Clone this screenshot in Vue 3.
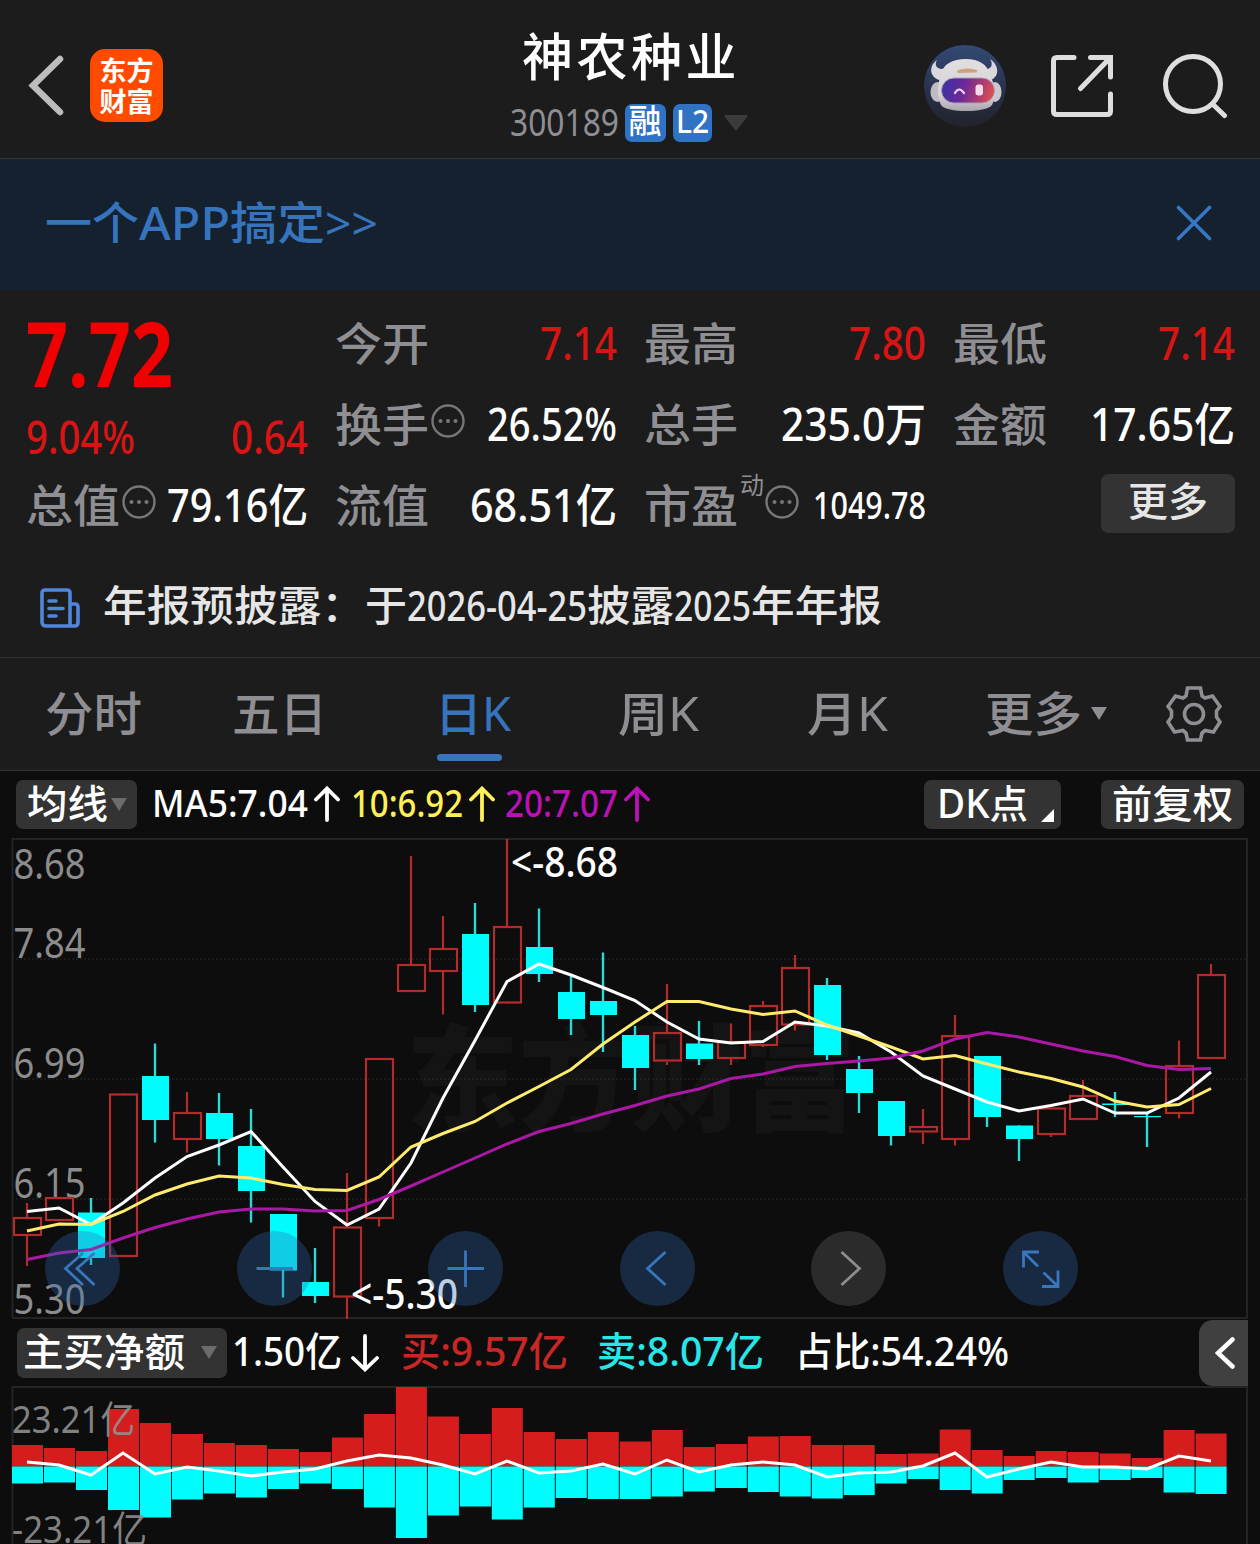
<script setup>
import { computed } from 'vue'

// squeeze or stretch a piece of text to the given width
const vFit = {
  mounted(el, { value }) {
    const w = el.getBoundingClientRect().width
    el.style.transform = `scaleX(${value / w})`
    el.style.marginRight = `${value - w}px`
  },
}

const quotes = [
  { label: '今开', value: '7.14', width: 77, red: true },
  { label: '最高', value: '7.80', width: 77, red: true },
  { label: '最低', value: '7.14', width: 77, red: true },
  { label: '换手', value: '26.52%', width: 130, tip: true },
  { label: '总手', value: '235.0万', width: 145 },
  { label: '金额', value: '17.65亿', width: 145 },
  { label: '总值', value: '79.16亿', width: 141, tip: true },
  { label: '流值', value: '68.51亿', width: 147 },
  { label: '市盈', value: '1049.78', width: 113, tip: true, sup: '动', small: true },
]

const notice = [
  { text: '年报预披露：', width: 262 },
  { text: '于', width: 42 },
  { text: '2026-04-25', width: 180 },
  { text: '披露', width: 87 },
  { text: '2025', width: 77 },
  { text: '年年报', width: 131 },
]

const tabs = [
  { text: '分时', width: 97 },
  { text: '五日', width: 95 },
  { text: '日K', width: 76, active: true },
  { text: '周K', width: 81 },
  { text: '月K', width: 81 },
]

const averages = [
  { text: 'MA5:7.04', width: 156, cls: 'white' },
  { text: '10:6.92', width: 112, cls: 'yellow' },
  { text: '20:7.07', width: 113, cls: 'purple' },
]

// [up, high, low, body top, body bottom]
const candles = [
  [1, 1203, 1266, 1217, 1236], [1, 1197, 1221, 1197, 1221], [0, 1198, 1265, 1212.5, 1258],
  [1, 1094, 1257, 1093.5, 1257], [0, 1043.5, 1142.5, 1076, 1120], [1, 1092, 1152.5, 1112, 1140],
  [0, 1093, 1165.5, 1113, 1139], [0, 1109, 1222.5, 1146, 1191], [0, 1214, 1297.5, 1214, 1270.5],
  [0, 1248, 1303, 1282, 1296], [1, 1173, 1319, 1226.5, 1297.5], [1, 1058, 1226.5, 1058, 1219],
  [1, 856, 992, 964, 992], [1, 916, 1014.5, 948, 972], [0, 903, 1012, 934, 1005],
  [1, 839, 1003, 926, 1003.5], [0, 908.5, 982, 947, 974], [0, 976, 1035, 992, 1019],
  [0, 952.5, 1052, 1001, 1015], [0, 1026, 1090, 1035, 1068], [1, 984, 1065, 1032, 1061.5],
  [0, 1021, 1065, 1043.5, 1059], [1, 1023.5, 1065, 1041, 1059], [1, 1001, 1047, 1005, 1046],
  [1, 955, 1030.5, 967, 1025.5], [0, 978, 1060, 985, 1055], [0, 1056, 1113, 1069, 1093],
  [0, 1101, 1145.5, 1101, 1136], [1, 1109, 1144, 1126, 1132.5], [1, 1015, 1145.5, 1035, 1140],
  [0, 1056, 1127, 1056, 1117], [0, 1125.5, 1161, 1125.5, 1139], [1, 1107.5, 1137, 1107.5, 1135],
  [1, 1080, 1120, 1095, 1120], [0, 1092, 1117, 1103.5, 1105], [0, 1112, 1147, 1116, 1117.2],
  [1, 1040.5, 1118.5, 1065, 1114], [1, 964, 1059, 974, 1059],
]

const ma5 = [1211.5, 1208, 1224.5, 1203, 1178, 1156.5, 1145, 1131.5, 1167, 1201.5, 1225, 1209, 1163, 1098, 1040.5, 981.5, 964, 975, 987.5, 1000.5, 1022, 1039, 1043, 1041.5, 1022, 1026, 1033, 1052, 1076, 1089, 1102, 1111, 1105.5, 1099, 1113, 1113, 1098, 1072]
const ma10 = [1231, 1224, 1224.5, 1211.5, 1195, 1184, 1176, 1178, 1184.5, 1189.5, 1190.5, 1177, 1147, 1133.5, 1121.5, 1103, 1086.5, 1069.5, 1044, 1022, 1001.5, 1001.5, 1009, 1014.5, 1011, 1025, 1036, 1047, 1059, 1055.5, 1064, 1072, 1078.5, 1087, 1101, 1107, 1104.5, 1088.5]
const ma20 = [1259.5, 1253, 1249.5, 1238, 1227.5, 1219, 1212, 1209, 1209, 1211, 1210.5, 1199.5, 1186, 1172, 1158, 1144, 1131.5, 1123.5, 1114, 1105.5, 1096, 1089, 1078.5, 1074, 1066.5, 1063.5, 1061, 1058, 1051, 1039, 1032.5, 1037, 1044, 1051, 1056.5, 1065.5, 1069.5, 1068.5]

const buyTop = [1445, 1448, 1451, 1409, 1423, 1434, 1443, 1445, 1449, 1452, 1437.5, 1414, 1387, 1416.5, 1434, 1408, 1432, 1439, 1432, 1441.5, 1430, 1447, 1444, 1436.5, 1436, 1445, 1445, 1454, 1453.5, 1429.5, 1450, 1456, 1451, 1452, 1453.5, 1458, 1430, 1433.5]
const sellBottom = [1483.5, 1482.5, 1490, 1510, 1517.5, 1499.5, 1493.5, 1497.5, 1489, 1483.5, 1489, 1507.5, 1538, 1515.5, 1506.5, 1519.5, 1507.5, 1498, 1499, 1499, 1496.5, 1491.5, 1488, 1492, 1496.5, 1498.5, 1495, 1483.5, 1479, 1490, 1493.5, 1480, 1478, 1482.5, 1480, 1478, 1492.5, 1494]
const net = [1462, 1465, 1475, 1453, 1474, 1467, 1471, 1476, 1472, 1469, 1461, 1455, 1458, 1465, 1474, 1461, 1473, 1471, 1464, 1474, 1460, 1472, 1465, 1462, 1465, 1477, 1473, 1472, 1466, 1453, 1477, 1469, 1462, 1467, 1467, 1469, 1456, 1461]

const toPoints = (list) => list.map((y, i) => `${27 + 32 * i},${y}`).join(' ')
const lines = computed(() => [
  { cls: 'line-white', points: toPoints(ma5) },
  { cls: 'line-yellow', points: toPoints(ma10) },
  { cls: 'line-purple', points: toPoints(ma20) },
])

const axis = [
  { text: '8.68', y: 879 },
  { text: '7.84', y: 958 },
  { text: '6.99', y: 1078 },
  { text: '6.15', y: 1198 },
  { text: '5.30', y: 1314 },
]

const controls = [
  { name: 'first', d: 'M38 22L20.5 37.5L38 54M49.5 22L32 37.5L49.5 54' },
  { name: 'zoom-out', d: 'M19.5 37.5H56' },
  { name: 'zoom-in', d: 'M19.5 37.5H56M37.5 19.5V56' },
  { name: 'prev', d: 'M45.5 21L27.5 37.5L45.5 54' },
  { name: 'next', d: 'M30.5 21L48.5 37.5L30.5 54', disabled: true },
  { name: 'expand', d: 'M36 21H20.5V36.5M21 21.5L35 35.5M39 55.5H55V39.5M54.5 55L40.500 41.500' },
]
</script>

<template>
  <div class="page">
    <header class="header">
      <div class="header-left">
        <svg class="back" width="38" height="64" viewBox="0 0 38 64">
          <path d="M33 5L6 31.5L33 58" />
        </svg>
        <div class="logo">
          <span>东方</span>
          <span>财富</span>
        </div>
      </div>
      <div class="header-center">
        <h1 class="title">神农种业</h1>
        <div class="code-row">
          <span v-fit="109" class="t code">300189</span>
          <span class="badge margin-badge">融</span>
          <span class="badge"><span v-fit="33" class="t">L2</span></span>
          <svg class="caret" width="24" height="16" viewBox="0 0 24 16"><path d="M1 0H23Q24 1 23 2L13 15Q12 16 11 15L1 2Q0 1 1 0Z" /></svg>
        </div>
      </div>
      <div class="header-right">
        <svg width="82" height="82" viewBox="0 0 82 82">
          <defs>
            <linearGradient id="sky" x1="0" y1="0" x2="0" y2="1">
              <stop offset="0" stop-color="#334a75" />
              <stop offset="0.55" stop-color="#28324c" />
              <stop offset="1" stop-color="#21232b" />
            </linearGradient>
            <linearGradient id="visor" x1="0" y1="0" x2="1" y2="0.15">
              <stop offset="0" stop-color="#3433a5" />
              <stop offset="0.45" stop-color="#6a2899" />
              <stop offset="0.8" stop-color="#ad3c70" />
              <stop offset="1" stop-color="#d54c58" />
            </linearGradient>
            <linearGradient id="shell" x1="0" y1="0" x2="0" y2="1">
              <stop offset="0" stop-color="#e2dfe1" />
              <stop offset="0.7" stop-color="#d6d2d6" />
              <stop offset="1" stop-color="#aaa5ad" />
            </linearGradient>
          </defs>
          <circle cx="41" cy="41" r="41" fill="url(#sky)" />
          <path d="M13 15C5 21 5 31 15 35L22 31L24 22L18 24C13 24 10 20 13 15ZM66 14C75 20 76 31 67 35L60 31L58 22L63 24C68 23 69 19 66 14Z" fill="#dbd8dc" />
          <ellipse cx="13.500" cy="47" rx="7" ry="10" fill="#bfbbc3" />
          <ellipse cx="71" cy="47" rx="6.500" ry="10" fill="#cbc7cd" />
          <path d="M17 30C19 19 28 14 42 14C55 14 63 19 66 30C70 37 73 51 68 60C62 68 22 68 17 60C12 50 14 37 17 30Z" fill="url(#shell)" />
          <rect x="17.5" y="33" width="53" height="25" rx="12.5" fill="url(#visor)" stroke="#aaa2b8" />
          <path d="M34 25Q44 22 53 25Q54 28 50 27.500L36 28Q31 28 34 25Z" fill="#d0a27c" />
          <path d="M31 48Q35 41 40 48" fill="none" stroke="#e9d7f2" stroke-width="2.2" stroke-linecap="round" />
          <rect x="51.5" y="39.5" width="7.5" height="11" rx="3" fill="#f4dbea" />
        </svg>
        <svg class="head-icon share" width="64" height="64" viewBox="0 0 64 64">
          <path d="M24 3.500H7Q3.500 3.500 3.500 7V57Q3.500 60.500 7 60.500H57Q60.500 60.500 60.500 57V40M40.500 3.500H60.500V23M59 5L30.500 34.500" />
        </svg>
        <svg class="head-icon" width="66" height="66" viewBox="0 0 66 66">
          <circle cx="31" cy="31" r="27.500" />
          <path d="M50.500 51L62.500 62.500" />
        </svg>
      </div>
    </header>

    <div class="banner">
      <div class="banner-text">
        <span v-fit="94" class="t">一个</span>
        <span v-fit="91" class="t">APP</span>
        <span v-fit="95" class="t">搞定</span>
        <span v-fit="53" class="t chevrons">&gt;&gt;</span>
      </div>
      <svg width="36" height="36" viewBox="0 0 36 36"><path d="M2.500 2.500L33.500 33.500M33.500 2.500L2.500 33.500" /></svg>
    </div>

    <section class="quote">
      <div class="price-cell">
        <span v-fit="147" class="t price">7.72</span>
        <div class="change">
          <span v-fit="109" class="t">9.04%</span>
          <span v-fit="77" class="t">0.64</span>
        </div>
      </div>
      <div v-for="q in quotes" :key="q.label" class="quote-cell">
        <span v-fit="94" class="t label">{{ q.label }}</span>
        <span v-if="q.sup" class="sup">{{ q.sup }}</span>
        <svg v-if="q.tip" class="tip" width="34" height="34" viewBox="0 0 34 34">
          <circle class="ring" cx="17" cy="17" r="15.5" />
          <circle cx="9.5" cy="17" r="2" />
          <circle cx="17" cy="17" r="2" />
          <circle cx="24.5" cy="17" r="2" />
        </svg>
        <span class="space"></span>
        <span v-fit="q.width" class="t value" :class="{ red: q.red, small: q.small }">{{ q.value }}</span>
      </div>
      <div class="more-cell">
        <button class="more">更多</button>
      </div>
    </section>

    <div class="notice">
      <svg width="40" height="40" viewBox="0 0 40 40">
        <path d="M29.500 38H6Q2 38 2 34V5Q2 2 5 2H27Q30 2 30 5V38M30 16H35Q38 16 38 19V34.500Q38 38 34.500 38H29M9 13H16M9 20.500H23M9 28H16" />
      </svg>
      <div class="notice-text">
        <span v-for="n in notice" :key="n.text" v-fit="n.width" class="t">{{ n.text }}</span>
      </div>
    </div>

    <nav class="tabs">
      <div v-for="t in tabs" :key="t.text" class="tab" :class="{ active: t.active }">
        <span v-fit="t.width" class="t">{{ t.text }}</span>
      </div>
      <div class="tab">
        <span v-fit="97" class="t">更多</span>
        <svg class="tab-caret" width="16" height="13" viewBox="0 0 16 13"><path d="M0 0H16L8 13Z" /></svg>
      </div>
      <svg class="gear" width="56" height="56" viewBox="0 0 56 56">
        <path d="M21.500 2H34.500L36 10L39 12L46.500 10L54 20.500L50.500 25V31L54 36L47.500 46L39 44.500L36 47L34.500 54H21.500L20 47L17 44.500L8.500 46L2 36L5.500 31V25L2 20.500L9.500 10L17 12L20 10Z" />
        <circle cx="28" cy="28" r="9.500" />
      </svg>
    </nav>

    <section class="charts">
      <div class="indicator">
        <button class="chip ma-chip">
          <span v-fit="81" class="t">均线</span>
          <svg width="16" height="13" viewBox="0 0 16 13"><path d="M0 0H16L8 13Z" /></svg>
        </button>
        <div v-for="a in averages" :key="a.text" class="average" :class="a.cls">
          <span v-fit="a.width" class="t">{{ a.text }}</span>
          <svg width="26" height="36" viewBox="0 0 26 36"><path d="M13 34V3M2 13.500L13 2.500L24 13.500" /></svg>
        </div>
        <span class="space"></span>
        <button class="chip dk-chip">
          <span v-fit="91" class="t">DK点</span>
          <svg width="13" height="13" viewBox="0 0 13 13"><path d="M13 0V13H0Z" /></svg>
        </button>
        <button class="chip adjust-chip"><span v-fit="121" class="t">前复权</span></button>
      </div>

      <div class="kline">
        <svg width="1260" height="482" viewBox="0 838 1260 482">
          <text class="watermark" x="406" y="1122" textLength="450" lengthAdjust="spacingAndGlyphs">东方财富</text>
          <path class="frame" d="M12.500 1318.500V839H1247V1318H12.500" />
          <path class="grid" d="M12 959H1247M12 1079H1247M12 1199H1247" />
          <text v-for="a in axis" :key="a.text" class="axis" x="13.500" :y="a.y" textLength="72" lengthAdjust="spacingAndGlyphs">{{ a.text }}</text>
          <g v-for="(c, i) in candles" :key="i" :class="c[0] ? 'up' : 'down'">
            <template v-if="c[0]">
              <path :d="`M${27 + 32 * i} ${c[1]}V${c[3]}M${27 + 32 * i} ${c[4]}V${c[2]}`" />
              <rect :x="14 + 32 * i" :y="c[3] + 1" width="27" :height="c[4] - c[3] - 2" />
            </template>
            <template v-else>
              <path :d="`M${27 + 32 * i} ${c[1]}V${c[2]}`" />
              <rect :x="14 + 32 * i" :y="c[3]" width="27" :height="c[4] - c[3]" />
            </template>
          </g>
          <polyline v-for="l in lines" :key="l.cls" :class="l.cls" :points="l.points" />
          <text class="mark" x="511" y="877" textLength="107" lengthAdjust="spacingAndGlyphs">&lt;-8.68</text>
          <text class="mark" x="351" y="1309" textLength="107" lengthAdjust="spacingAndGlyphs">&lt;-5.30</text>
        </svg>
        <div class="controls">
          <button v-for="c in controls" :key="c.name" class="control" :class="{ disabled: c.disabled }">
            <svg width="75" height="75" viewBox="0 0 75 75"><path :d="c.d" /></svg>
          </button>
        </div>
      </div>

      <div class="flow-head">
        <button class="chip flow-chip">
          <span v-fit="162" class="t">主买净额</span>
          <svg width="16" height="13" viewBox="0 0 16 13"><path d="M0 0H16L8 13Z" /></svg>
        </button>
        <div class="flow-net">
          <span v-fit="110" class="t">1.50亿</span>
          <svg width="28" height="38" viewBox="0 0 28 38"><path d="M14 2V35M2 24L14 35.500L26 24" /></svg>
        </div>
        <span v-fit="167" class="t buy">买:9.57亿</span>
        <span v-fit="167" class="t sell">卖:8.07亿</span>
        <span v-fit="214" class="t ratio">占比:54.24%</span>
        <span class="space"></span>
        <button class="fold">
          <svg width="20" height="32" viewBox="0 0 20 32"><path d="M17.500 2.500L3 16L17.500 29.500" /></svg>
        </button>
      </div>

      <svg class="flow" width="1260" height="158" viewBox="0 1386 1260 158">
        <path class="frame" d="M12.500 1544V1387H1247V1544" />
        <g v-for="(y, i) in buyTop" :key="i">
          <rect class="bar-buy" :x="(12 + 31.99 * i).toFixed(1)" :y="y" width="31" :height="1466.5 - y" />
          <rect class="bar-sell" :x="(12 + 31.99 * i).toFixed(1)" y="1466.5" width="31" :height="sellBottom[i] - 1466.5" />
        </g>
        <polyline class="line-net" :points="toPoints(net)" />
        <text class="axis flow-axis" x="12" y="1433" textLength="123" lengthAdjust="spacingAndGlyphs">23.21亿</text>
        <text class="axis flow-axis" x="12" y="1543" textLength="135" lengthAdjust="spacingAndGlyphs">-23.21亿</text>
      </svg>
    </section>
  </div>
</template>

<style>
body {
  background: #0d0d0d;
}
</style>

<style scoped>
.page {
  width: 1260px;
  height: 1544px;
  overflow: hidden;
  background: #1c1c1c;
  color: #fff;
  font-family: "Noto Sans", "Noto Sans CJK SC", sans-serif;
  font-weight: 500;
}

svg {
  display: block;
  flex-shrink: 0;
}

button {
  border: none;
  padding: 0;
  font: inherit;
  color: inherit;
}

.t {
  display: inline-block;
  flex-shrink: 0;
  white-space: nowrap;
  transform-origin: left center;
}

.space {
  flex: 1;
}

/* header */
.header {
  box-sizing: border-box;
  display: grid;
  grid-template-columns: 1fr auto 1fr;
  height: 159px;
  border-bottom: 1px solid #303536;
}

.header-left {
  display: flex;
  align-items: center;
  padding: 13px 0 0 27px;
  gap: 25px;
}

.back path {
  fill: none;
  stroke: #bdbdbd;
  stroke-width: 6.5;
  stroke-linecap: round;
}

.logo {
  display: flex;
  flex-direction: column;
  align-items: center;
  justify-content: center;
  width: 73px;
  height: 73px;
  border-radius: 15px;
  background: #ff4a00;
  font-size: 27px;
  font-weight: 700;
  line-height: 31px;
}

.header-center {
  display: flex;
  flex-direction: column;
  align-items: center;
}

.title {
  margin: 24px 0 0 2px;
  font-size: 51px;
  font-weight: 500;
  line-height: 64px;
  letter-spacing: 3.5px;
}

.code-row {
  display: flex;
  align-items: center;
  height: 40px;
  margin: 15px 3px 0 0;
}

.code {
  margin-top: -5px;
  color: #8e8e93;
  font-size: 39px;
  font-weight: 400;
  line-height: 40px;
}

.badge {
  display: flex;
  justify-content: center;
  width: 39px;
  height: 38px;
  border-radius: 7px;
  background: #3072c4;
  font-size: 33px;
  line-height: 34px;
}

.margin-badge {
  width: 41px;
  margin: 0 7px 0 6px;
}

.caret {
  margin-left: 12px;
  fill: #3b3b3b;
}

.header-right {
  display: flex;
  align-items: center;
  justify-content: flex-end;
  padding: 13px 32px 0 0;
}

.head-icon {
  margin-left: 48px;
  fill: none;
  stroke: #dedede;
  stroke-width: 5;
  stroke-linecap: round;
}

.share {
  margin-left: 44px;
}

/* promo banner */
.banner {
  box-sizing: border-box;
  display: flex;
  align-items: center;
  justify-content: space-between;
  height: 131px;
  padding: 0 48px 3px 45px;
  background: #15212f;
}

.banner-text {
  display: flex;
  color: #3674bd;
  font-size: 45px;
  line-height: 60px;
}

.chevrons {
  font-weight: 400;
}

.banner > svg {
  fill: none;
  stroke: #3678c4;
  stroke-width: 3.6;
  stroke-linecap: round;
}

/* quote */
.quote {
  display: grid;
  grid-template-columns: repeat(4, 280px);
  grid-template-rows: repeat(3, 81px);
  column-gap: 29px;
  padding: 13px 25px 0 28px;
}

.price-cell {
  grid-row: span 2;
  color: #f00000;
}

.price {
  display: block;
  width: max-content;
  margin-left: -2px;
  font-size: 90px;
  font-weight: 700;
  line-height: 98px;
}

.change {
  display: flex;
  justify-content: space-between;
  margin: 6px 0 0 -2px;
  color: #d91414;
  font-size: 45px;
  line-height: 60px;
}

.quote-cell {
  display: flex;
  align-items: center;
  font-size: 46px;
  line-height: 60px;
}

.label {
  margin-left: -2px;
  color: #8e8e93;
  font-size: 45px;
  font-weight: 450;
}

.value {
  margin-top: -3px;
}

.value.red {
  color: #d91414;
}

.value.small {
  font-size: 38px;
}

.sup {
  align-self: flex-start;
  width: 24px;
  margin: 6px 0 0 2px;
  color: #8e8e93;
  font-size: 24px;
  font-weight: 400;
  line-height: 28px;
}

.tip {
  margin: 0 0 7px 2px;
  fill: #77777a;
}

.sup + .tip {
  margin-left: 1px;
}

.ring {
  fill: none;
  stroke: #77777a;
  stroke-width: 2.4;
}

.more-cell {
  display: flex;
  justify-content: flex-end;
  align-items: center;
}

.more {
  width: 134px;
  height: 59px;
  margin-bottom: 4px;
  padding-bottom: 5px;
  border-radius: 7px;
  background: #333;
  color: #e6e6e6;
  font-size: 40px;
  line-height: 54px;
}

.notice {
  box-sizing: border-box;
  display: flex;
  align-items: center;
  height: 111px;
  padding: 6px 0 0 40px;
}

.notice svg {
  margin: 6px 23px 0 0;
  fill: none;
  stroke: #4f86dc;
  stroke-width: 3.6;
  stroke-linecap: round;
  stroke-linejoin: round;
}

.notice-text {
  display: flex;
  color: #e6e6e6;
  font-size: 42px;
  line-height: 60px;
}

/* period tabs */
.tabs {
  box-sizing: border-box;
  display: grid;
  grid-template-columns: 187px 203px 183px 189px 178px 182px auto;
  align-items: center;
  justify-content: start;
  height: 114px;
  padding-left: 45px;
  border-top: 1px solid #333;
  border-bottom: 1px solid #333;
}

.tab {
  position: relative;
  display: flex;
  align-items: center;
  height: 112px;
  color: #8e8e93;
  font-size: 47px;
  font-weight: 450;
}

.tab .t {
  margin-top: -7px;
}

.tab.active {
  color: #3674bd;
}

.tab.active::after {
  content: "";
  position: absolute;
  left: 2px;
  bottom: 9px;
  width: 65px;
  height: 7px;
  border-radius: 4px;
  background: #3674bd;
}

.tab-caret {
  margin: -2px 0 0 9px;
  fill: #8e8e93;
}

.gear {
  margin-left: -1px;
  fill: none;
  stroke: #8e8e93;
  stroke-width: 3.6;
}

/* charts */
.charts {
  background: #0d0d0d;
}

.indicator {
  display: flex;
  align-items: center;
  height: 67px;
  padding: 0 16px;
}

.chip {
  display: flex;
  align-items: center;
  height: 49px;
  box-sizing: border-box;
  border-radius: 7px;
  background: #333;
  font-size: 39px;
  line-height: 46px;
}

.chip .t {
  margin-top: -4px;
}

.chip svg {
  fill: #6c6c6c;
}

.ma-chip {
  width: 121px;
  margin-right: 15px;
  padding-left: 11px;
}

.ma-chip svg {
  margin-left: 3px;
}

.average {
  display: flex;
  align-items: center;
  margin-right: 11px;
  font-size: 38px;
  line-height: 50px;
}

.average .t {
  margin-top: -5px;
}

.average svg {
  margin: -2px 0 0 6px;
}

.average svg,
.flow-net svg {
  fill: none;
  stroke: currentColor;
  stroke-width: 3.8;
  stroke-linecap: round;
}

.white {
  color: #fff;
}

.yellow {
  margin-right: 10px;
  color: #fff05a;
}

.purple {
  color: #ba12b4;
}

.dk-chip {
  width: 137px;
  margin-right: 40px;
  padding-left: 13px;
}

.dk-chip svg {
  align-self: flex-end;
  margin: 0 0 7px 13px;
  fill: #fff;
}

.adjust-chip {
  width: 143px;
  padding-left: 11px;
}

.kline {
  position: relative;
  height: 481px;
}

.frame {
  fill: none;
  stroke: #242424;
  stroke-width: 2;
}

.grid {
  stroke: #2b2b2b;
  stroke-width: 1;
  stroke-dasharray: 2 2;
}

.watermark {
  fill: #141414;
  font-size: 116px;
  font-weight: 900;
}

.axis {
  fill: #8c8c8c;
  font-size: 41px;
  font-weight: 400;
}

.flow-axis {
  fill: #929292;
  fill-opacity: 0.9;
  font-size: 38px;
}

.mark {
  fill: #fff;
  font-size: 41px;
}

.up path,
.up rect {
  fill: none;
  stroke: #b32b2b;
  stroke-width: 2.2;
}

.down path {
  stroke: #2ed8d8;
  stroke-width: 2.4;
}

.down rect {
  fill: #00fdfd;
}

polyline {
  fill: none;
  stroke-width: 3;
}

.line-white,
.line-net {
  stroke: #fff;
}

.line-yellow {
  stroke: #ffec6e;
}

.line-purple {
  stroke: #ab18a5;
}

.controls {
  position: absolute;
  left: 45px;
  top: 392.5px;
  display: flex;
  gap: 116.6px;
}

.control {
  width: 75px;
  height: 75px;
  border-radius: 50%;
  background: rgba(47, 107, 178, 0.32);
}

.control path {
  fill: none;
  stroke: #3876be;
  stroke-width: 2.8;
}

.control.disabled {
  background: rgba(110, 110, 110, 0.32);
}

.control.disabled path {
  stroke: #8c8c8c;
}

.flow-head {
  display: flex;
  align-items: center;
  height: 67px;
  padding: 0 12px 0 17px;
  font-size: 40px;
  line-height: 50px;
}

.flow-head > .t,
.flow-net .t {
  margin-top: -4px;
}

.flow-chip {
  width: 210px;
  height: 50px;
  padding-left: 6px;
}

.flow-chip svg {
  margin-left: 16px;
}

.flow-net {
  display: flex;
  align-items: center;
  margin: 0 22px 0 5px;
}

.flow-net svg {
  margin-left: 9px;
}

.buy {
  color: #c92626;
}

.sell {
  margin-left: 29px;
  color: #28e6e8;
}

.ratio {
  margin-left: 31px;
}

.fold {
  display: flex;
  align-items: center;
  width: 49px;
  height: 66px;
  padding-left: 16px;
  border-radius: 14px 0 0 14px;
  background: #404040;
}

.fold path {
  fill: none;
  stroke: #fff;
  stroke-width: 4.5;
  stroke-linecap: round;
}

.bar-buy {
  fill: #d51d1d;
}

.bar-sell {
  fill: #00fdfd;
}
</style>
